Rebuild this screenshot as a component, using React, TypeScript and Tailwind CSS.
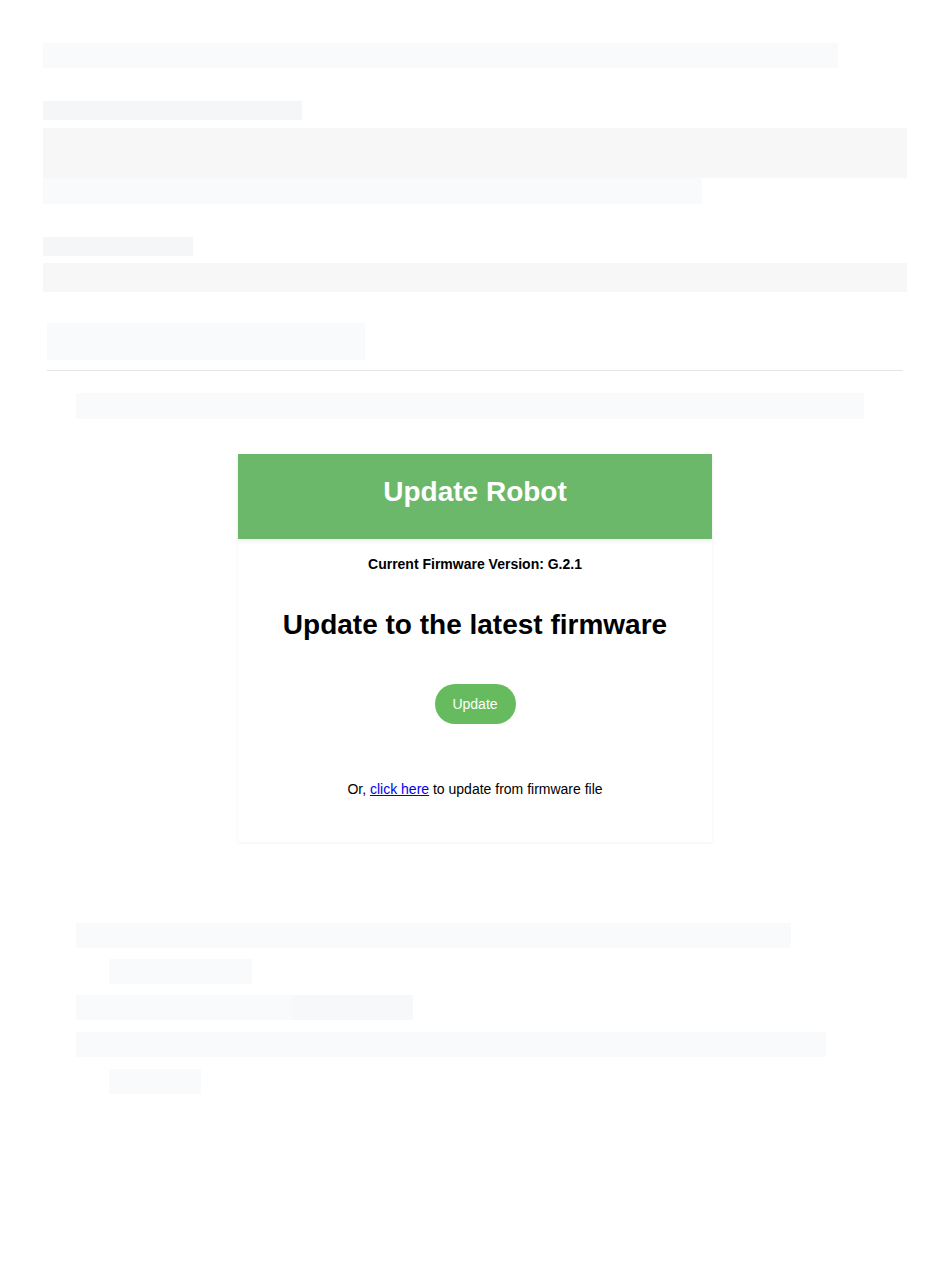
function App() {
  return (
    <div className="min-h-screen bg-white px-[43px] pt-[43px] pb-[190px] font-['Liberation_Sans',Arial,sans-serif]">
      {/* top placeholder blocks */}
      <div className="w-[795px] h-[25px] bg-[#f9fafb]" />
      <div className="mt-[33px] w-[259px] h-[19px] bg-[#f5f6f8]" />
      <div className="mt-[8px] w-[864px] h-[50px] bg-[#f7f7f7]" />
      <div className="w-[659px] h-[26px] bg-[#f9fafb]" />
      <div className="mt-[33px] w-[150px] h-[19px] bg-[#f5f6f8]" />
      <div className="mt-[7px] w-[864px] h-[29px] bg-[#f7f7f7]" />

      <div className="mx-[4px] mt-[31px]">
        <div className="w-[318px] h-[37px] bg-[#f9fafb]" />
        <div className="mt-[10px] border-t border-[#e5e5e5]" />
      </div>

      <div className="ml-[33px] mt-[22px] w-[788px] h-[26px] bg-[#f9fafb]" />

      {/* update card */}
      <div className="mx-auto mt-[35px] w-[474px] bg-white shadow-[0_1px_3px_rgba(0,0,0,0.06)]">
        <div className="h-[85px] pb-[10px] bg-[#6bb86a] flex items-center justify-center shadow-[0_3px_4px_rgba(0,0,0,0.06)]">
          <h1 className="text-white text-[28px] font-bold">Update Robot</h1>
        </div>
        <div className="flex flex-col items-center pb-[42px]">
          <p className="mt-[15px] text-[14px] font-bold text-black">
            Current Firmware Version: G.2.1
          </p>
          <h2 className="mt-[34px] text-[28px] font-bold text-black leading-[32px]">
            Update to the latest firmware
          </h2>
          <button className="mt-[43px] w-[81px] h-[40px] rounded-full bg-[#66bb5e] text-white text-[14px]">
            Update
          </button>
          <p className="mt-[55px] text-[14px] text-black">
            Or,{" "}
            <a href="#" className="text-[#0000ee] underline">
              click here
            </a>{" "}
            to update from firmware file
          </p>
        </div>
      </div>

      {/* bottom placeholder blocks */}
      <div className="ml-[33px] mt-[81px] flex flex-col">
        <div className="w-[715px] h-[25px] bg-[#f9fafb]" />
        <div className="mt-[11px] ml-[33px] w-[143px] h-[25px] bg-[#f9fafb]" />
        <div className="mt-[11px] flex h-[25px]">
          <div className="w-[216px] bg-[#f9fafb]" />
          <div className="w-[121px] bg-[#f7f8fa]" />
        </div>
        <div className="mt-[12px] w-[750px] h-[25px] bg-[#f9fafb]" />
        <div className="mt-[12px] ml-[33px] w-[92px] h-[25px] bg-[#f9fafb]" />
      </div>
    </div>
  );
}

export default App;
